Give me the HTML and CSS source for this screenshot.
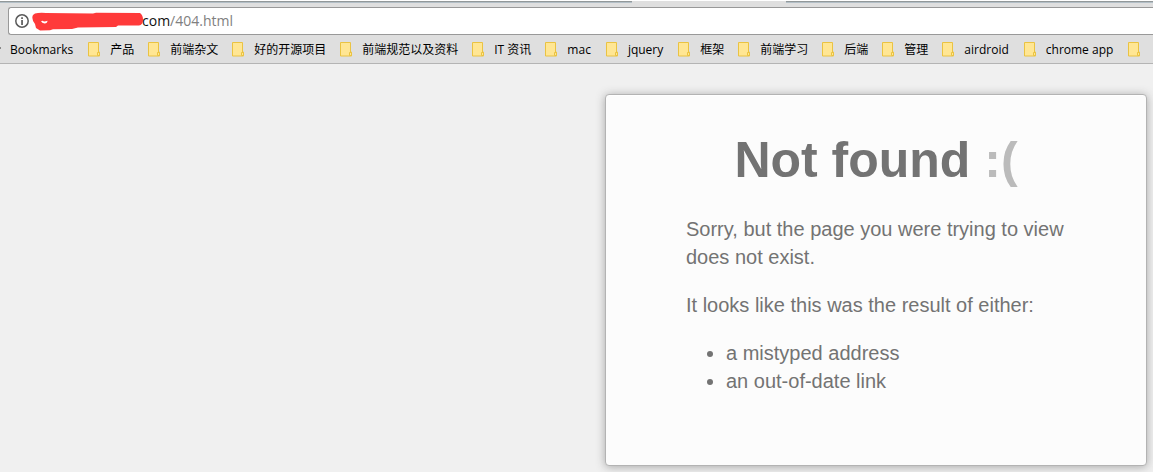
FILE: index.html
```
<!DOCTYPE html>
<html lang="en">
<head>
<meta charset="utf-8">
<title>Page Not Found :(</title>
<link rel="stylesheet" href="styles.css">
</head>
<body>
<svg class="defs" width="0" height="0" aria-hidden="true">
  <symbol id="folder" viewBox="0 0 12 15">
    <path d="M.5 .5h10v9.500h1v4H.5z" fill="#ffe694" stroke="#eac342"/>
    <path d="M9.500 13.500v-3h2v3z" fill="#ffe694" stroke="#eac342"/>
  </symbol>
</svg>
<header class="browser">
  <div class="tabstrip"><span class="tabs-left"></span><span class="tab-active"></span><span class="tabs-right"></span></div>
  <div class="toolbar">
    <div class="address">
      <button class="info" type="button" aria-label="View site information">
        <svg width="14" height="14" viewBox="0 0 14 14"><circle cx="7" cy="7" r="6.200" fill="none" stroke="#5a5a5a" stroke-width="1.500"/><path d="M6.200 3.200h1.700v1.700H6.200zM6.200 6h1.700v5H6.200z" fill="#5a5a5a"/></svg>
      </button>
      <svg class="scribble" width="112" height="20" viewBox="0 0 112 20"><path d="M3 2.500Q7 1.500 14 2L61 2.500 64 1.800 108 2Q111 4 111 8.500 111 14 107 14.500L86 14.500 84 16 46 16.500 40 18 21 18.300 18 19.300 8 19.600 4 17 3 13Q-1 8 1 4z" fill="#ff3a3a"/><path d="M9 10.300q1.500-1 3 .3 2 0 3.500-.8 0 2.500-3 2.700-2.500-.2-3.500-2.200z" fill="#fff"/></svg>
      <label class="host" for="url">com</label>
      <input class="url" id="url" type="text" value="/404.html" spellcheck="false">
    </div>
  </div>
  <nav class="bookmarks" aria-label="Bookmarks">
    <a class="bookmark latin" href="#">Bookmarks</a>
    <a class="bookmark" href="#"><svg class="folder"><use href="#folder"/></svg>产品</a>
    <a class="bookmark" href="#"><svg class="folder"><use href="#folder"/></svg>前端杂文</a>
    <a class="bookmark" href="#"><svg class="folder"><use href="#folder"/></svg>好的开源项目</a>
    <a class="bookmark" href="#"><svg class="folder"><use href="#folder"/></svg>前端规范以及资料</a>
    <a class="bookmark" href="#"><svg class="folder"><use href="#folder"/></svg>IT 资讯</a>
    <a class="bookmark latin" href="#"><svg class="folder"><use href="#folder"/></svg>mac</a>
    <a class="bookmark latin" href="#"><svg class="folder"><use href="#folder"/></svg>jquery</a>
    <a class="bookmark" href="#"><svg class="folder"><use href="#folder"/></svg>框架</a>
    <a class="bookmark" href="#"><svg class="folder"><use href="#folder"/></svg>前端学习</a>
    <a class="bookmark" href="#"><svg class="folder"><use href="#folder"/></svg>后端</a>
    <a class="bookmark" href="#"><svg class="folder"><use href="#folder"/></svg>管理</a>
    <a class="bookmark latin" href="#"><svg class="folder"><use href="#folder"/></svg>airdroid</a>
    <a class="bookmark latin" href="#"><svg class="folder"><use href="#folder"/></svg>chrome app</a>
    <a class="bookmark" href="#" aria-label="Folder"><svg class="folder"><use href="#folder"/></svg></a>
  </nav>
</header>
<main class="page">
  <section class="card">
    <h1 class="title">Not found <span class="face">:(</span></h1>
    <div class="message">
      <p>Sorry, but the page you were trying to view does not exist.</p>
      <p>It looks like this was the result of either:</p>
      <ul>
        <li>a mistyped address</li>
        <li>an out-of-date link</li>
      </ul>
    </div>
  </section>
</main>
</body>
</html>
```
FILE: styles.css
```
* { box-sizing: border-box; }
body {
  margin: 0;
  background: #f0f0f0;
  overflow: hidden;
}
.defs { display: block; }
.browser {
  background: #dfdfdf;
  border-bottom: 1px solid #b4b4b4;
  font-family: "Open Sans", "Noto Sans CJK SC", sans-serif;
}
.tabstrip {
  display: flex;
  height: 3px;
  border-top: 1px solid #fff;
}
.tabs-left, .tabs-right {
  background: #b3bfc7;
  border-top: 1px solid #929899;
}
.tabs-left { flex: 632; }
.tab-active { flex: 154; }
.tabs-right { flex: 367; }
.toolbar { padding: 4px 0 0 8px; }
.address {
  display: flex;
  align-items: center;
  height: 28px;
  padding-left: 6px;
  background: #fff;
  border: 1px solid #999;
  border-right: 0;
  border-radius: 3px 0 0 3px;
  font-size: 14px;
}
.info {
  display: flex;
  padding: 0;
  border: 0;
  background: none;
}
.scribble { margin-left: 3px; }
.host {
  margin-left: -2px;
  padding-bottom: 2px;
  color: #111;
}
.url {
  flex: 1;
  min-width: 0;
  padding: 0 0 2px;
  border: 0;
  outline: 0;
  background: none;
  color: #808080;
  font: inherit;
}
.bookmarks {
  display: flex;
  align-items: center;
  gap: 14px;
  height: 28px;
  padding: 2px 0 0 10px;
  overflow: hidden;
  background: linear-gradient(#888, #888) 0 12px / 1px 2px no-repeat;
}
.bookmark {
  display: flex;
  flex: none;
  align-items: center;
  gap: 10px;
  color: #000;
  font-size: 12px;
  line-height: 18px;
  text-decoration: none;
  white-space: nowrap;
}
.latin { padding-right: 1px; }
.folder {
  width: 12px;
  height: 15px;
  margin-bottom: 2px;
}
.page {
  padding: 30px 6px 6px;
  color: #737373;
  font: 20px/28px "Liberation Sans", Arial, sans-serif;
}
.card {
  max-width: 542px;
  margin-left: auto;
  padding: 30px 20px 50px;
  background: #fcfcfc;
  border: 1px solid #b3b3b3;
  border-radius: 4px;
  box-shadow: 0 1px 10px #a7a7a7, inset 0 1px 0 #fff;
}
.title {
  margin: 0 10px;
  font-size: 50px;
  line-height: 70px;
  text-align: center;
}
.face { color: #bbb; }
.message {
  max-width: 380px;
  margin: 0 auto;
}
.message p { margin: 20px 0; }
.message ul {
  margin: 20px 0;
  padding-left: 40px;
}
```
